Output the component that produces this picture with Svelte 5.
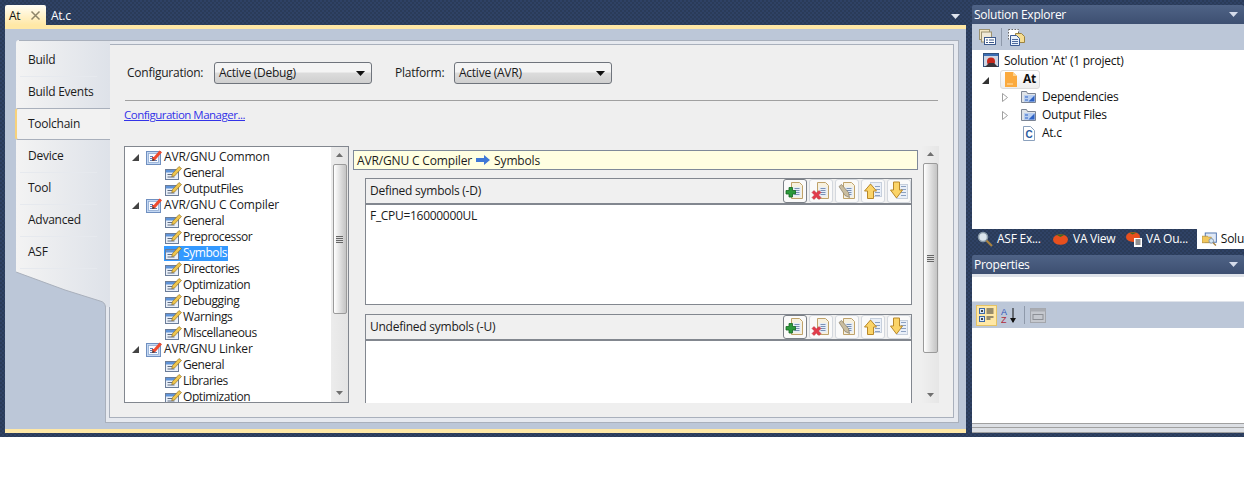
<script>
  const tabs = ['Build', 'Build Events', 'Toolchain', 'Device', 'Tool', 'Advanced', 'ASF'];
  const tree = [
    ['AVR/GNU Common', 0], ['General', 1], ['OutputFiles', 1],
    ['AVR/GNU C Compiler', 0], ['General', 1], ['Preprocessor', 1], ['Symbols', 1, true], ['Directories', 1],
    ['Optimization', 1], ['Debugging', 1], ['Warnings', 1], ['Miscellaneous', 1],
    ['AVR/GNU Linker', 0], ['General', 1], ['Libraries', 1], ['Optimization', 1]
  ];
  const groups = ['Defined symbols (-D)', 'Undefined symbols (-U)'];
</script>

{#snippet caret(color = '#fff')}
  <svg class="caret" width="9" height="5" viewBox="0 0 9 5"><path d="M0 0h9L4.500 5z" fill={color}/></svg>
{/snippet}

{#snippet parentIcon()}
  <svg class="ic" width="17" height="16" viewBox="0 0 17 16">
    <rect x="0.500" y="2.500" width="14" height="13" fill="#c4d8f3" stroke="#6f8fc0"/>
    <rect x="2.500" y="4.500" width="10" height="9" fill="#f7faff" stroke="#8fabd3" stroke-width=".8"/>
    <path d="M4 7.500h3M4 9.500h3M4 11.500h7" stroke="#5f7fb3"/>
    <path d="M6 8.500h2" stroke="#d0392f" stroke-width="1.200"/>
    <path d="M6.500 9.500L13.500 1.500l2.500 1.800-7 8-2.800.8z" fill="#ef4b2f"/>
    <path d="M6.500 9.500l2.500 1.800-2.800.8z" fill="#3a3a3a"/>
  </svg>
{/snippet}

{#snippet childIcon()}
  <svg class="ic" width="17" height="16" viewBox="0 0 17 16">
    <rect x="0.500" y="4.500" width="13" height="10" fill="#e9eff8" stroke="#6b7d99"/>
    <rect x="1" y="5" width="12" height="2.500" fill="#5f93d8"/>
    <path d="M2.500 9.500h5M2.500 12h7" stroke="#5f6c82"/>
    <path d="M7.500 8.500L14 1.500l2.500 2-7 7.500-2.800.6z" fill="#eec54d" stroke="#86661b" stroke-width=".6"/>
  </svg>
{/snippet}

{#snippet docIcon(overlay)}
  <svg width="20" height="20" viewBox="0 0 20 20">
    {#if overlay < 3}
      <path d="M6.500 1.500h8l3 3v13h-11z" fill="#f7f1df" stroke="#bfa26a"/>
      <rect x="8" y="6" width="8" height="9.500" fill="#e7eef8"/>
      <path d="M9.500 7.500h5M9.500 9.500h5M9.500 11.500h5M9.500 13.500h5" stroke="#6d86ad" stroke-width=".9"/>
    {/if}
    {#if overlay === 0}
      <path d="M1 9.500h3v-3h3.500v3h3v3.500h-3v3H4v-3H1z" fill="#2b9a3a" stroke="#176622" stroke-width=".8"/>
    {:else if overlay === 1}
      <path d="M1 11.500l2-2 2.500 2.500 2.500-2.500 2 2-2.500 2.500 2.500 2.500-2 2-2.500-2.500-2.500 2.500-2-2 2.500-2.500z" fill="#e23b4b" stroke="#b52a3a" stroke-width=".5"/>
    {:else if overlay === 2}
      <path d="M2 5.500l2.500-2 7 8 1 5-4.500-2z" fill="#c9bda0" stroke="#857a66" stroke-width=".7"/>
    {:else}
      <rect x="7.500" y={overlay === 3 ? 1.500 : 3.500} width="11" height="14" fill="#e9eff8" stroke="#c6cfdc"/>
      <path d="M12 5.500h5M12 8.500h5M12 11.500h5M12 14.500h5" stroke="#8ca1c2"/>
      {#if overlay === 3}
        <path d="M7.500 3L13.500 10h-3v7.500h-6V10h-3z" fill="#fbd468" stroke="#b8882a"/>
      {:else}
        <path d="M4.500 1h6v8h3L7.500 17l-6-8h3z" fill="#fbd468" stroke="#b8882a"/>
      {/if}
    {/if}
  </svg>
{/snippet}

<div class="page">
  <section class="doc">
    <div class="tabstrip">
      <div class="doctab on">At<svg width="11" height="11" viewBox="0 0 11 11"><path d="M1.500 1.500l8 8M9.500 1.500l-8 8" stroke="#8d8468" stroke-width="1.500"/></svg></div>
      <div class="doctab">At.c</div>
      <span class="stripmenu">{@render caret('#dfe5ef')}</span>
    </div>
    <div class="docbody">
      <nav class="rail">
        <svg class="railshape" width="94" height="268" viewBox="0 0 94 268">
          <defs><linearGradient id="railfill"><stop offset="0" stop-color="#f3f3f3"/><stop offset="1" stop-color="#dee2e9"/></linearGradient></defs>
          <path d="M0 3Q0 0 3 0H94V267H89.500Q89 262 84 261L49 250L0 232Z" fill="url(#railfill)"/>
          <path d="M89.500 267Q89 262 84 261L49 250L0 232" fill="none" stroke="#a9b0bc"/>
          <path d="M3 .5H94" stroke="#a9b0bc"/>
        </svg>
        {#each tabs as t, i}
          <div class="vtab" class:sel={i === 2}>{t}</div>
        {/each}
      </nav>
      <div class="frame">
        <div class="inner">
          <div class="config">
            <label for="c1">Configuration:</label>
            <div id="c1" class="select">Active (Debug){@render caret('#111')}</div>
            <label for="c2" class="plat">Platform:</label>
            <div id="c2" class="select">Active (AVR){@render caret('#111')}</div>
          </div>
          <div class="rule"></div>
          <a class="link" href="#top">Configuration Manager...</a>
          <div class="split">
            <div class="tree">
              <div class="rows">
                {#each tree as [label, depth, sel]}
                  <div class="row" class:child={depth === 1}>
                    {#if depth === 0}
                      <svg class="exp" width="7" height="7" viewBox="0 0 7 7"><path d="M7 0v7H0z" fill="#444"/></svg>
                      {@render parentIcon()}
                      <span class="lbl">{label}</span>
                    {:else}
                      <span class="cell" class:hl={sel}>{@render childIcon()}<span class="lbl">{label}</span></span>
                    {/if}
                  </div>
                {/each}
              </div>
              <div class="sb">
                <svg class="arr" width="7" height="4" viewBox="0 0 7 4"><path d="M3.500 0L7 4H0z" fill="#6f6f6f"/></svg>
                <div class="thumb tt"><span class="grip"></span></div>
                <div class="spacer"></div>
                <svg class="arr" width="7" height="4" viewBox="0 0 7 4"><path d="M3.500 4L7 0H0z" fill="#6f6f6f"/></svg>
              </div>
            </div>
            <div class="detail">
              <div class="breadcrumb">AVR/GNU C Compiler
                <svg width="14" height="10" viewBox="0 0 14 10"><path d="M0 3h8V0l6 5-6 5V7H0z" fill="#3f78d6"/></svg>
                Symbols</div>
              {#each groups as g, gi}
                <div class="group">
                  <div class="ghead">
                    <span>{g}</span>
                    <div class="btns">
                      {#each [0, 1, 2, 3, 4] as b}
                        <div class="ibtn" class:first={b === 0}>{@render docIcon(b)}</div>
                      {/each}
                    </div>
                  </div>
                  <div class="gbody">{gi === 0 ? 'F_CPU=16000000UL' : ''}</div>
                </div>
              {/each}
            </div>
            <div class="sb wide">
              <svg class="arr" width="7" height="4" viewBox="0 0 7 4"><path d="M3.500 0L7 4H0z" fill="#6f6f6f"/></svg>
              <div class="thumb tw"><span class="grip"></span></div>
              <div class="spacer"></div>
              <svg class="arr" width="7" height="4" viewBox="0 0 7 4"><path d="M3.500 4L7 0H0z" fill="#6f6f6f"/></svg>
            </div>
          </div>
        </div>
      </div>
    </div>
    <div class="goldbar"></div>
  </section>

  <aside class="side">
    <div class="ptitle">Solution Explorer {@render caret('#d5dcea')}</div>
    <div class="toolbar stb">
      <svg width="17" height="17" viewBox="0 0 17 17"><rect x=".5" y=".5" width="10" height="10" fill="#f2e6c4" stroke="#9c9270"/><rect x="2.500" y="3" width="10" height="10" fill="#efe9d8" stroke="#9c9270"/><rect x="5.500" y="8.500" width="11" height="7" fill="#fff" stroke="#3d5a8c"/><path d="M7 11h2M10 11h5M7 13.500h2M10 13.500h5" stroke="#3d5a8c"/></svg>
      <i class="sep"></i>
      <svg width="17" height="17" viewBox="0 0 17 17"><rect x=".5" y=".5" width="10" height="10" fill="#fff" stroke="#666" stroke-dasharray="1.500 1.500"/><path d="M7.500 4.500h6l3 3v6h-9z" fill="#f5dc91" stroke="#9c8340"/><path d="M2.500 6.500h6l3 3v7h-9z" fill="#e8f0fb" stroke="#3b5a93"/><path d="M4 10.500h6M4 12.500h6M4 14.500h6" stroke="#3b5a93" stroke-width=".9"/></svg>
    </div>
    <div class="stree">
      <div class="srow s0">
        <svg width="17" height="16" viewBox="0 0 17 16"><rect x="0.500" y="0.500" width="15" height="13" fill="#cfd6e4" stroke="#33527f"/><rect x="1" y="1" width="14" height="2" fill="#3b6fb5"/><circle cx="8" cy="8.500" r="4" fill="#c7281c"/><path d="M2 14L6 10h5l4 4z" fill="#38343a"/></svg>
        <span>Solution 'At' (1 project)</span>
      </div>
      <div class="srow s1">
        <svg class="exp" width="7" height="7" viewBox="0 0 7 7"><path d="M7 0v7H0z" fill="#333"/></svg>
        <div class="proj">
          <svg width="12" height="15" viewBox="0 0 12 15"><path d="M0 0h8l4 4v11H0z" fill="#fbaa3e"/><path d="M8 0l4 4H8z" fill="#fdd28f"/><path d="M2 12h6" stroke="#ffe2b3"/></svg>
          <b>At</b>
        </div>
      </div>
      {#each ['Dependencies', 'Output Files'] as f}
        <div class="srow s2">
          <svg class="tri" width="6" height="9" viewBox="0 0 6 9"><path d="M.500 .500L5.500 4.500.5 8.500z" fill="#fff" stroke="#a0a0a0"/></svg>
          <svg class="fold" width="16" height="14" viewBox="0 0 16 14"><path d="M.500 1.500h5l1 2h8v9H.500z" fill="#dfe3e8" stroke="#7b8493"/><rect x="3" y="5" width="11" height="7" fill="#b8cef0"/><path d="M13.500 5.500v6h-6z" fill="#2e62c4"/><path d="M4 7h3M4 10h3" stroke="#2e62c4"/></svg>
          <span>{f}</span>
        </div>
      {/each}
      <div class="srow s3">
        <svg width="12" height="15" viewBox="0 0 12 15"><path d="M.500 .500h7l4 4v10H.500z" fill="#fff" stroke="#8ba1bd"/><text x="2.500" y="12" font-family="Liberation Sans" font-weight="700" font-size="10" fill="#2a5aa0">C</text></svg>
        <span>At.c</span>
      </div>
    </div>
    <div class="btabs">
      <div class="btab w1"><svg width="16" height="16" viewBox="0 0 16 16"><circle cx="6" cy="6" r="4.500" fill="#dce6ee" stroke="#8899a8" stroke-width="1.500"/><path d="M9.500 9.500l5.500 5.500" stroke="#a8823f" stroke-width="2.200"/></svg>ASF Ex...</div>
      <div class="btab w2"><svg width="15" height="12" viewBox="0 0 15 12"><ellipse cx="7.500" cy="6.500" rx="7.500" ry="5.300" fill="#e8501e"/><path d="M3 1.500h9L7.500 4z" fill="#41691f"/></svg>VA View</div>
      <div class="btab w3"><svg width="16" height="16" viewBox="0 0 16 16"><ellipse cx="7" cy="6" rx="7" ry="5" fill="#e8501e"/><path d="M3 1.500h8L6.500 3.500z" fill="#41691f"/><rect x="8" y="7" width="8" height="9" fill="#fff"/><path d="M9.500 9h5M9.500 11h5M9.500 13h5" stroke="#222"/></svg>VA Ou...</div>
      <div class="btab on"><svg width="16" height="16" viewBox="0 0 16 16"><rect x="3.500" y="1.500" width="12" height="10" fill="#dfe8f6" stroke="#4a70ad"/><path d="M0 5h6l1 1h3v6H0z" fill="#f2c75c" stroke="#a8822c" stroke-width=".7"/><circle cx="10" cy="10" r="2.500" fill="#d6e6f3" stroke="#7e93a8"/><path d="M12 12l3 3" stroke="#a8823f" stroke-width="1.500"/></svg>Solu</div>
    </div>
    <div class="ptitle prop">Properties {@render caret('#d5dcea')}</div>
    <div class="pwrap">
      <div class="pselect"></div>
      <div class="toolbar ptb">
        <span class="pbtn"><svg width="16" height="16" viewBox="0 0 16 16"><rect x=".5" y="1.500" width="5" height="5" fill="#dbe8f8" stroke="#3f6aa8"/><rect x=".5" y="9.500" width="5" height="5" fill="#dbe8f8" stroke="#3f6aa8"/><path d="M2 4h2M3 3v2M2 12h2M3 11v2" stroke="#111"/><path d="M7.500 2h7M7.500 4h7M7.500 6h7M7.500 10h7M7.500 12h4" stroke="#333"/></svg></span>
        <svg class="az" width="17" height="17" viewBox="0 0 17 17"><text x="0" y="8" font-family="Liberation Sans" font-size="9" fill="#2f55b8">A</text><text x="0" y="16" font-family="Liberation Sans" font-size="9" fill="#b02a3a">Z</text><path d="M12 1v14" stroke="#111"/><path d="M9 11l3 5 3-5z" fill="#111"/></svg>
        <i class="sep"></i>
        <svg width="16" height="15" viewBox="0 0 16 15"><rect x=".5" y=".5" width="15" height="14" fill="#c5c8ce" stroke="#a3a6ac"/><rect x=".5" y=".5" width="15" height="3" fill="#a9acb2"/><rect x="3" y="6.500" width="10" height="5" fill="none" stroke="#8d9096"/></svg>
      </div>
      <div class="pgrid"></div>
      <div class="pfoot"></div>
    </div>
  </aside>
</div>
<div class="rest"></div>

<style>
  :global(body) { margin: 0; background: #fff; }
  .page {
    display: flex; height: 437px; box-sizing: border-box; padding-left: 5px; gap: 6px;
    background: repeating-conic-gradient(#2a3b58 0 25%, #2f4265 0 50%) 0 0 / 4px 4px;
    font: 12px/16px "Open Sans", "Noto Sans", sans-serif; color: #1b1b1b; letter-spacing: -.25px; overflow: hidden;
  }
  .doc { width: 961px; flex: none; display: flex; flex-direction: column; }
  .tabstrip { height: 25px; display: flex; align-items: flex-end; position: relative; flex: none; }
  .doctab { height: 20px; padding: 0 4px 0 5px; line-height: 21px; color: #fff; display: flex; align-items: center; gap: 10px; }
  .doctab.on { width: 33px; padding: 0 4px; color: #111; background: linear-gradient(#fffdf5, #ffe8a6); border-radius: 2px 2px 0 0; }
  .stripmenu { position: absolute; right: 6px; top: 14px; }
  .caret { display: block; }
  .docbody { flex: none; height: 404px; box-sizing: border-box; border-top: 4px solid #ffe8a6; background: #bcc7d8; padding: 11px 7px 6px 11px; display: flex; }
  .goldbar { height: 4px; flex: none; background: #ffe8a6; }
  .rail { width: 94px; flex: none; height: 268px; box-sizing: border-box; padding-top: 5px; position: relative; z-index: 1; }
  .railshape { position: absolute; left: 0; top: 0; }
  .vtab { height: 32px; box-sizing: border-box; line-height: 29px; color: #1b1b1b; border-bottom: 1px solid #e6e9ee; margin-right: 13px; margin-left: 4px; padding-left: 8px; position: relative; }
  .vtab.sel { margin: -1px 0 1px -1px; height: 32px; background: #f2f2f2; border: 1px solid #a9b0bc; border-left: 2px solid #f7d27c; border-right: 0; border-radius: 3px 0 0 3px; padding-left: 11px; }
  .frame { flex: 1; margin-left: -5px; box-sizing: border-box; border: 1px solid #a9b0bc; background: #e6e9ef; padding: 3px 4px 4px 3px; }
  .inner { height: 100%; box-sizing: border-box; border: 1px solid #a9b0bc; background: #efefef; padding: 16px 14px 0 14px; }
  .config { display: flex; align-items: center; height: 24px; padding-left: 3px; }
  .config label { width: 87px; flex: none; }
  .config .plat { width: 59px; margin-left: 23px; }
  .select {
    width: 158px; height: 22px; flex: none; box-sizing: border-box; padding: 0 6px 0 4px; border: 1px solid #6f747c; border-radius: 3px;
    background: linear-gradient(#f4f4f4 0 45%, #dcdcdc 50%, #cfcfcf); display: flex; align-items: center; justify-content: space-between;
  }
  .rule { height: 1px; background: #a0a0a0; margin: 15px 0 6px 1px; width: 813px; }
  .link { display: block; color: #3333e8; height: 39px; text-decoration: underline; font-size: 11.5px; letter-spacing: -.5px; }
  .split { display: flex; height: 257px; }
  .tree { width: 225px; flex: none; box-sizing: border-box; border: 1px solid #82878f; background: #fff; display: flex; overflow: hidden; }
  .rows { flex: 1; padding-top: 2px; overflow: hidden; min-width: 0; }
  .row { height: 16px; position: relative; padding-left: 38px; display: flex; align-items: center; white-space: nowrap; letter-spacing: -.15px; }
  .row.child { padding-left: 39px; letter-spacing: -.42px; }
  .row .exp { position: absolute; left: 7px; top: 5px; }
  .row .ic { flex: none; }
  .row:not(.child) .ic { margin-left: -17px; }
  .cell { display: flex; align-items: center; height: 15px; padding-left: 1px; }
  .lbl { padding: 0 1px; }
  .hl { background: #3399ff; color: #fff; }
  .sb { width: 17px; flex: none; background: linear-gradient(90deg, #ececec, #e4e4e4); display: flex; flex-direction: column; align-items: center; padding: 6px 0 7px; box-sizing: border-box; }
  .arr { flex: none; }
  .thumb { width: 14px; box-sizing: border-box; border: 1px solid #9a9a9a; border-radius: 2px; background: linear-gradient(90deg, #fff, #d4d4d4 70%, #c4c4c4); display: flex; align-items: center; justify-content: center; flex: none; margin-top: 7px; }
  .tt { height: 150px; }
  .tw { height: 190px; width: 15px; }
  .grip { width: 7px; height: 7px; background: repeating-linear-gradient(#666 0 1px, #ddd 1px 2px); }
  .spacer { flex: 1; }
  .detail { width: 565px; flex: none; margin-left: 4px; overflow: hidden; padding-top: 4px; box-sizing: border-box; }
  .breadcrumb { height: 20px; box-sizing: border-box; border: 1px solid #7f8a99; background: #ffffe1; padding-left: 3px; line-height: 19px; display: flex; align-items: center; gap: 4px; letter-spacing: -.15px; }
  .group { margin: 8px 6px 9px 12px; height: 127px; box-sizing: border-box; border: 1px solid #82878f; }
  .ghead { height: 26px; box-sizing: border-box; border-bottom: 2px solid #82878f; display: flex; align-items: center; justify-content: space-between; padding: 0 0 0 4px; background: #f0f0f0; }
  .btns { display: flex; gap: 2px; }
  .ibtn { width: 24px; height: 24px; box-sizing: border-box; border: 1px solid #d4d8de; border-radius: 3px; background: #fafafa; display: flex; align-items: center; justify-content: center; }
  .ibtn.first { border-color: #7b8087; }
  .gbody { height: 99px; box-sizing: border-box; background: #fff; padding: 3px 4px; letter-spacing: -.3px; }
  .wide { margin-left: 3px; width: 18px; background: linear-gradient(90deg, #efefef, #e6e6e6); padding-bottom: 6px; }

  .side { flex: 1; display: flex; flex-direction: column; min-width: 0; padding: 5px 0 4px; box-sizing: border-box; height: 437px; }
  .ptitle { height: 19px; flex: none; box-sizing: border-box; padding: 0 6px 0 2px; background: linear-gradient(#4f6386, #3d4f71); color: #fff; line-height: 19px; display: flex; align-items: center; justify-content: space-between; border-radius: 2px 2px 0 0; }
  .toolbar { height: 26px; flex: none; background: #bcc7d8; display: flex; align-items: center; box-sizing: border-box; }
  .stb { gap: 5px; padding-left: 7px; }
  .stb .sep + svg { margin-left: 1px; }
  .sep { width: 1px; height: 18px; background: #8e99aa; }
  .stree { height: 179px; flex: none; background: #fff; padding-top: 2px; box-sizing: border-box; color: #111; }
  .srow { height: 18px; display: flex; align-items: center; gap: 4px; position: relative; }
  .s0 { padding-left: 11px; }
  .s1 { padding-left: 28px; }
  .s1 .exp { position: absolute; left: 10px; top: 7px; }
  .proj { height: 19px; width: 40px; flex: none; box-sizing: border-box; border: 1px solid #dcdcdc; border-radius: 3px; background: linear-gradient(#fff, #eee); display: flex; align-items: center; padding-left: 4px; gap: 6px; }
  .proj b { font-weight: 700; }
  .s2 { padding-left: 30px; gap: 13px; }
  .s2 .fold { margin-right: -8px; }
  .s3 { padding-left: 51px; gap: 7px; }
  .btabs { height: 20px; flex: none; display: flex; align-items: center; color: #fff; padding-left: 5px; }
  .btab { display: flex; align-items: center; gap: 4px; white-space: nowrap; flex: none; }
  .w1 { width: 76px; }
  .w2 { width: 73px; gap: 5px; }
  .w3 { width: 71px; }
  .btab.on { flex: 1; min-width: 0; height: 20px; background: #fff; color: #111; padding-left: 5px; overflow: hidden; }
  .prop { margin-top: 6px; }
  .pwrap { flex: 1; background: #dfe3ea; padding: 3px 0 0; display: flex; flex-direction: column; min-height: 0; }
  .pselect { height: 24px; flex: none; background: #fff; }
  .ptb { margin-top: 1px; padding: 0 0 0 4px; gap: 4px; }
  .pbtn { width: 21px; height: 21px; background: #ffe8a6; border: 1px solid #e5c365; box-sizing: border-box; display: flex; align-items: center; justify-content: center; flex: none; }
  .az { margin-right: 2px; }
  .ptb svg:last-child { margin-left: 1px; }
  .pgrid { height: 95px; flex: none; background: #fff; }
  .pfoot { flex: 1; border-top: 1px solid #a0a0a0; border-bottom: 1px solid #a0a0a0; background: linear-gradient(#dcdfe4 0 3px, #a0a0a0 3px 4px, #dcdfe4 4px); }
  .rest { height: 43px; background: #fff; }
</style>
